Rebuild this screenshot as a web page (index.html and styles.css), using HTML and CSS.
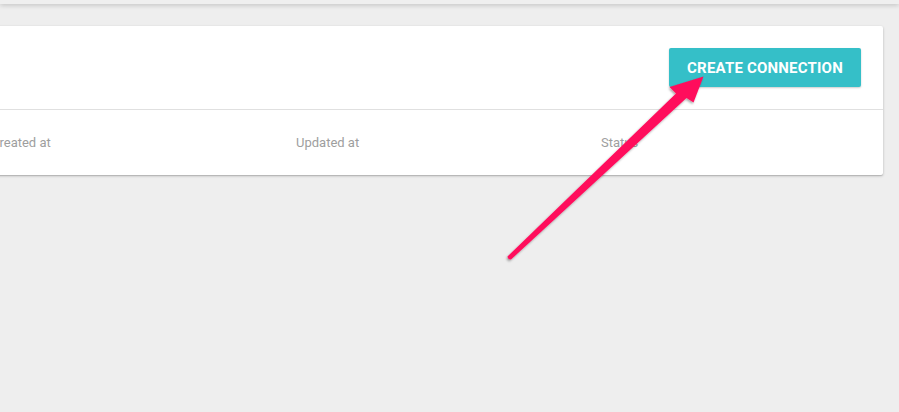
FILE: index.html
```html
<!DOCTYPE html>
<html>
<head>
<meta charset="utf-8">
<link rel="stylesheet" href="styles.css">
</head>
<body>
<div class="topbar"></div>
<main class="main">
  <section class="card">
    <div class="card-head">
      <button class="btn-create">CREATE CONNECTION</button>
    </div>
    <div class="table-head">
      <div class="col">Created at</div>
      <div class="col">Updated at</div>
      <div class="col">Status</div>
    </div>
  </section>
</main>
<svg class="arrow" width="899" height="412" viewBox="0 0 899 412">
  <defs>
    <filter id="sh" x="-10%" y="-10%" width="130%" height="130%">
      <feDropShadow dx="-1" dy="1.5" stdDeviation="1.2" flood-color="#000" flood-opacity="0.35"/>
    </filter>
  </defs>
  <path filter="url(#sh)" fill="#ff0e5c" d="M507.5 256.5 L676 93.5 L669.5 87 L703.5 76.5 L693.5 102.5 L686.5 98 L511 259.5 Q508 260 507.5 256.5 Z"/>
</svg>
</body>
</html>
```
FILE: styles.css
```css
html, body {
  margin: 0;
  padding: 0;
  background: #eeeeee;
  font-family: Roboto, "Noto Sans", sans-serif;
  overflow: hidden;
  height: 412px;
}
.topbar {
  height: 4px;
  background: #efefef;
  box-shadow: 0 1px 5px rgba(0,0,0,0.22);
  position: relative;
  z-index: 1;
}
.main {
  padding: 22px 16px 0 0;
}
.card {
  margin-left: -40px;
  background: #fff;
  border-radius: 2px;
  box-shadow: 0 1px 3px rgba(0,0,0,0.2), 0 1px 1px rgba(0,0,0,0.12);
}
.card-head {
  display: flex;
  justify-content: flex-end;
  padding: 22px;
  border-bottom: 1px solid #e0e0e0;
}
.btn-create {
  height: 39px;
  width: 192px;
  border: none;
  border-radius: 2px;
  background: #35bfc8;
  color: #fff;
  font-family: Roboto, sans-serif;
  font-weight: 700;
  font-size: 15px;
  letter-spacing: 0.2px;
  padding: 0;
  box-shadow: 0 1px 2px rgba(0,0,0,0.2);
}
.table-head {
  display: flex;
  height: 65px;
  align-items: center;
  padding-left: 31px;
  overflow: hidden;
}
.col {
  flex: 0 0 305px;
  font-size: 13px;
  color: #9e9e9e;
}
.arrow {
  position: absolute;
  left: 0;
  top: 0;
}
```
